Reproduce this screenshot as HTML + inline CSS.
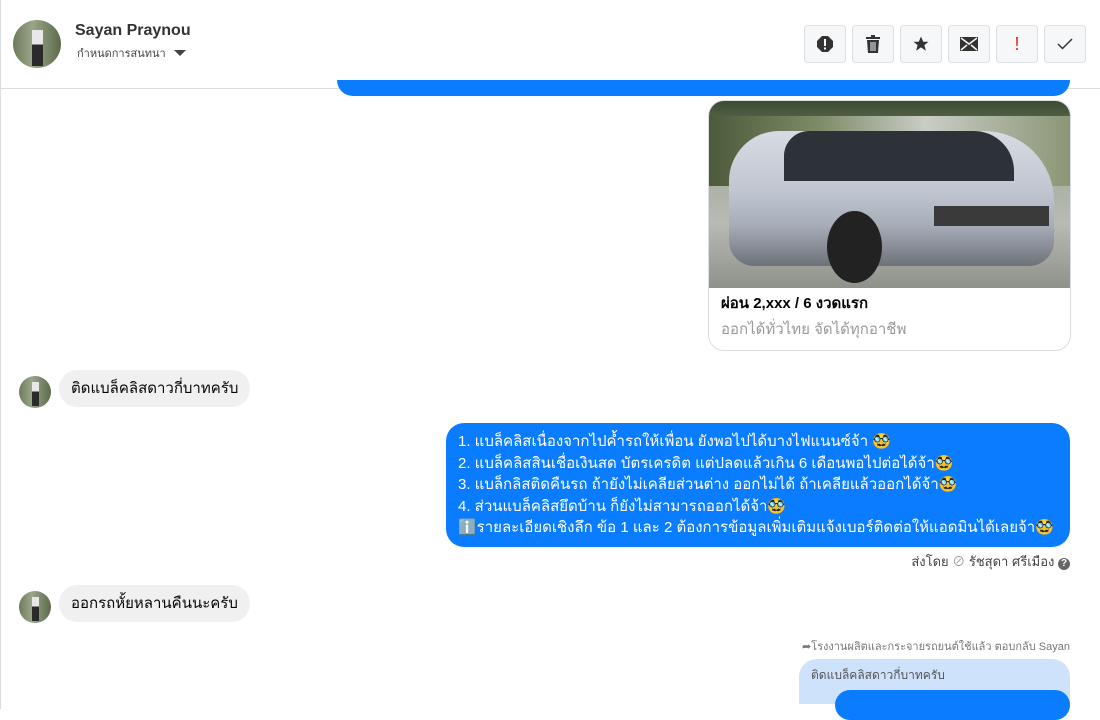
<!DOCTYPE html>
<html><head><meta charset="utf-8"><style>
body{margin:0;width:1100px;height:709px;overflow:hidden;background:#fff;font-family:"Liberation Sans","Noto Sans CJK SC",sans-serif;position:relative}
.a{position:absolute}
.btn{position:absolute;top:25px;width:40px;height:36px;border:1px solid #dde0e4;border-radius:4px;background:#f6f7f9;display:flex;align-items:center;justify-content:center}
.av{position:absolute;border-radius:50%;overflow:hidden;background:linear-gradient(90deg,#6d7b5a,#9aa58a 40%,#5d6a4a)}
.av:after{content:"";position:absolute;left:40%;top:20%;width:22%;height:75%;background:linear-gradient(#e8e8e8 0 40%,#2a2a2a 40%)}
.gb{position:absolute;background:#f0f0f0;border-radius:18px;font-size:15px;color:#050505;padding:0 12px;line-height:37px}
</style></head><body>
<div class="a" style="left:0;top:0;width:1px;height:709px;background:#dadde1"></div>
<div class="av" style="left:13px;top:20px;width:48px;height:48px"></div>
<div class="a" style="left:75px;top:22px;font-size:16px;font-weight:bold;color:#333">Sayan Praynou</div>
<div class="a" style="left:77px;top:44px;font-size:11px;color:#444">กำหนดการสนทนา</div>
<div class="a" style="left:174px;top:50px;width:0;height:0;border-left:6px solid transparent;border-right:6px solid transparent;border-top:6px solid #444"></div>
<div class="btn" style="left:804px"><svg width="18" height="18" viewBox="0 0 18 18"><path d="M6 1h6l5 5v6l-5 5H6l-5-5V6z" fill="#333"/><rect x="8" y="4" width="2" height="7" fill="#fff"/><rect x="8" y="12.5" width="2" height="2" fill="#fff"/></svg></div>
<div class="btn" style="left:852px"><svg width="16" height="18" viewBox="0 0 16 18"><rect x="1" y="2" width="14" height="2" fill="#333"/><rect x="6" y="0" width="4" height="2" fill="#333"/><path d="M2 5h12l-1 13H3z" fill="#333"/><path d="M6 7v9M8 7v9M10 7v9" stroke="#f6f7f9" stroke-width="1"/></svg></div>
<div class="btn" style="left:900px"><svg width="18" height="18" viewBox="0 0 24 24"><path d="M12 2l3 7h7l-5.5 4.5 2 7.5L12 16.5 5.5 21l2-7.5L2 9h7z" fill="#333"/></svg></div>
<div class="btn" style="left:948px"><svg width="18" height="14" viewBox="0 0 18 14"><rect width="18" height="14" fill="#333"/><path d="M1 1l8 6 8-6M1 13l6-5M17 13l-6-5" stroke="#f6f7f9" stroke-width="1.5" fill="none"/></svg></div>
<div class="btn" style="left:996px;color:#e3261c;font-size:18px">!</div>
<div class="btn" style="left:1044px"><svg width="16" height="12" viewBox="0 0 16 12"><path d="M1 6l4.5 4.5L15 1" stroke="#333" stroke-width="1.5" fill="none"/></svg></div>
<div class="a" style="left:0;top:88px;width:1100px;height:1px;background:#dadde1"></div>
<div class="a" style="left:337px;top:80px;width:733px;height:16px;background:#0a7cff;border-radius:0 0 18px 18px"></div>
<div class="a" style="left:708px;top:100px;width:361px;height:249px;border:1px solid #dadde1;border-radius:16px;overflow:hidden;background:#fff">
<div style="height:187px;background:linear-gradient(180deg,#3b4a33 0,#6c7a5b 20%,#a8b0a0 40%,#b8bab4 65%,#8f928a 100%);position:relative">
<div style="position:absolute;left:0;top:15px;width:361px;height:70px;background:linear-gradient(90deg,#4c5a3c,#7c8a66 30%,#c9cdc6 60%,#8b9675)"></div>
<div style="position:absolute;left:20px;top:30px;width:325px;height:135px;background:linear-gradient(180deg,#d7dbe3 0,#c0c6d0 45%,#a7adb8 70%,#6d7178 100%);border-radius:50px 70px 25px 25px"></div>
<div style="position:absolute;left:75px;top:30px;width:230px;height:50px;background:#2d3138;border-radius:25px 40px 0 0"></div>
<div style="position:absolute;left:225px;top:105px;width:115px;height:20px;background:#3a3a3a"></div>
<div style="position:absolute;left:118px;top:110px;width:55px;height:72px;border-radius:50%;background:#222"></div>
</div>
<div style="padding:3px 12px 0;font-size:15px;font-weight:bold;color:#050505">ผ่อน 2,xxx / 6 งวดแรก</div>
<div style="padding:2px 12px;font-size:15px;color:#999">ออกได้ทั่วไทย จัดได้ทุกอาชีพ</div>
</div>
<div class="av" style="left:19px;top:376px;width:32px;height:32px"></div>
<div class="gb" style="left:59px;top:370px">ติดแบล็คลิสดาวกี่บาทครับ</div>
<div class="a" style="left:446px;top:423px;width:600px;padding:8px 12px;background:#0a7cff;border-radius:18px;color:#fff;font-size:15px;line-height:21.5px">1. แบล็คลิสเนื่องจากไปค้ำรถให้เพื่อน ยังพอไปได้บางไฟแนนซ์จ้า 🥸<br>2. แบล็คลิสสินเชื่อเงินสด บัตรเครดิต แต่ปลดแล้วเกิน 6 เดือนพอไปต่อได้จ้า🥸<br>3. แบล็กลิสติดคืนรถ ถ้ายังไม่เคลียส่วนต่าง ออกไม่ได้ ถ้าเคลียแล้วออกได้จ้า🥸<br>4. ส่วนแบล็คลิสยึดบ้าน ก็ยังไม่สามารถออกได้จ้า🥸<br>ℹ️รายละเอียดเชิงลึก ข้อ 1 และ 2 ต้องการข้อมูลเพิ่มเติมแจ้งเบอร์ติดต่อให้แอดมินได้เลยจ้า🥸</div>
<div class="a" style="right:30px;top:551px;font-size:13px;color:#444">ส่งโดย <span style="color:#999">⊘</span> รัชสุดา ศรีเมือง <span style="display:inline-block;width:12px;height:12px;border-radius:50%;background:#666;color:#fff;font-size:10px;line-height:12px;text-align:center;font-weight:bold">?</span></div>
<div class="av" style="left:19px;top:591px;width:32px;height:32px"></div>
<div class="gb" style="left:59px;top:585px">ออกรถหั้ยหลานคืนนะครับ</div>
<div class="a" style="right:30px;top:637px;font-size:11px;color:#777">➦โรงงานผลิตและกระจายรถยนต์ใช้แล้ว ตอบกลับ Sayan</div>
<div class="a" style="left:799px;top:659px;width:247px;height:45px;padding:0 12px;background:#cfe2fc;border-radius:18px 18px 0 0;font-size:12px;color:#555;line-height:32px">ติดแบล็คลิสดาวกี่บาทครับ</div>
<div class="a" style="left:835px;top:690px;width:235px;height:30px;background:#0a7cff;border-radius:18px"></div>
</body></html>
